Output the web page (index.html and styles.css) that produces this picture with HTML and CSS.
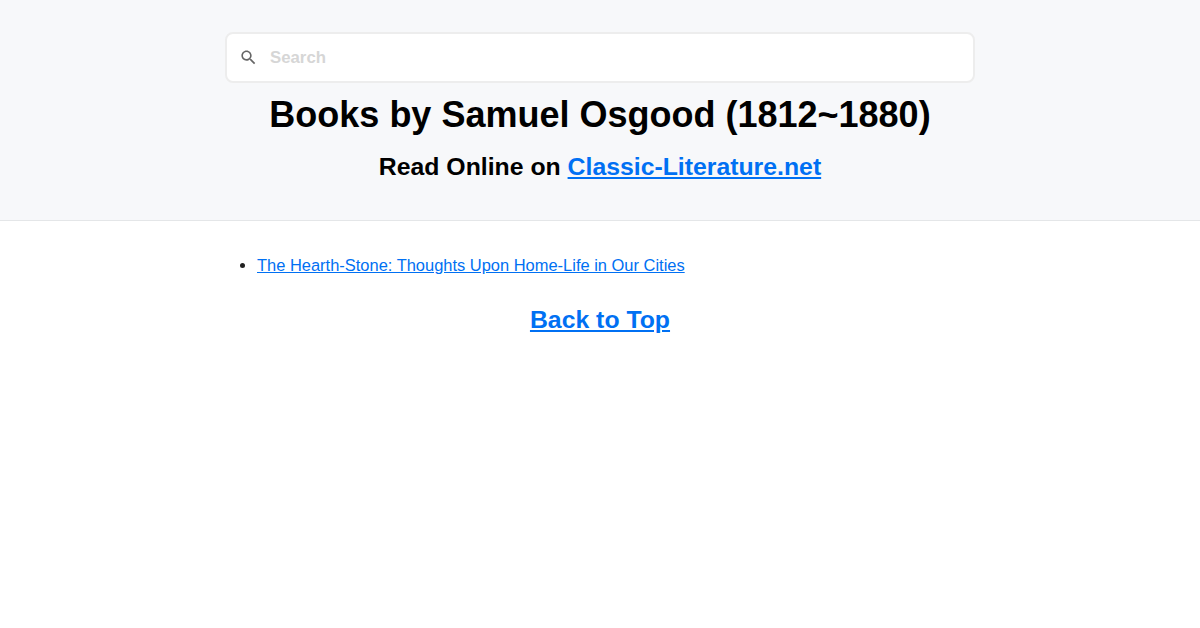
FILE: index.html
```html
<!DOCTYPE html>
<html lang="en">
<head>
    <meta charset="UTF-8">
    <meta name="viewport" content="width=device-width, initial-scale=1.0">
    <title>Books by Samuel Osgood (1812~1880)</title>
    <link rel="stylesheet" href="styles.css">
</head>
<body>
    <header id="top">
        <div class="container">
            <form class="search">
                <svg class="search-icon" viewBox="0 0 24 24" width="19" height="19">
                    <path d="M15.5 14h-.79l-.28-.27C15.41 12.59 16 11.11 16 9.5 16 5.91 13.09 3 9.5 3S3 5.91 3 9.5 5.91 16 9.5 16c1.61 0 3.09-.59 4.23-1.57l.27.28v.79l5 4.99L20.49 19l-4.99-5zm-6 0C7.01 14 5 11.99 5 9.5S7.01 5 9.5 5 14 7.01 14 9.5 11.99 14 9.5 14z"></path>
                </svg>
                <input type="search" class="search-input" placeholder="Search">
            </form>
            <h1>Books by Samuel Osgood (1812~1880)</h1>
            <h2>Read Online on <a href="#">Classic-Literature.net</a></h2>
        </div>
    </header>
    <main class="container">
        <ul class="books">
            <li><a href="#">The Hearth-Stone: Thoughts Upon Home-Life in Our Cities</a></li>
        </ul>
        <h2><a href="#top">Back to Top</a></h2>
    </main>
</body>
</html>
```
FILE: styles.css
```css
body {
    margin: 0;
    font-family: "Liberation Sans", Arial, sans-serif;
    font-size: 16.47px;
    line-height: 24px;
    background-color: #fff;
    color: #212121;
}
header {
    box-sizing: border-box;
    height: 221px;
    padding-top: 32px;
    background-color: #f7f8fa;
    border-bottom: 1px solid #e4e6e8;
}
.container {
    width: 750px;
    margin: 0 auto;
}
h1, h2 {
    color: #000;
    text-align: center;
}
h1 {
    margin: 9px 0 0;
    font-size: 36px;
    line-height: 46px;
}
h2 {
    margin: 14px 0 0;
    font-size: 24.8px;
    line-height: 29px;
}
a {
    color: #0070f3;
}
.search {
    box-sizing: border-box;
    display: flex;
    align-items: center;
    height: 51px;
    padding: 0 12px;
    background-color: #fff;
    border: 2px solid #ededed;
    border-radius: 8px;
}
.search-icon {
    fill: #666;
}
.search-input {
    flex: 1;
    margin-left: 12px;
    padding: 0;
    border: none;
    outline: none;
    background: none;
    font-family: inherit;
    font-size: 16.8px;
    font-weight: bold;
}
.search-input::placeholder {
    color: #d6d6d6;
}
.books {
    margin: 0;
    padding: 32px 0 14px 32px;
}
```
